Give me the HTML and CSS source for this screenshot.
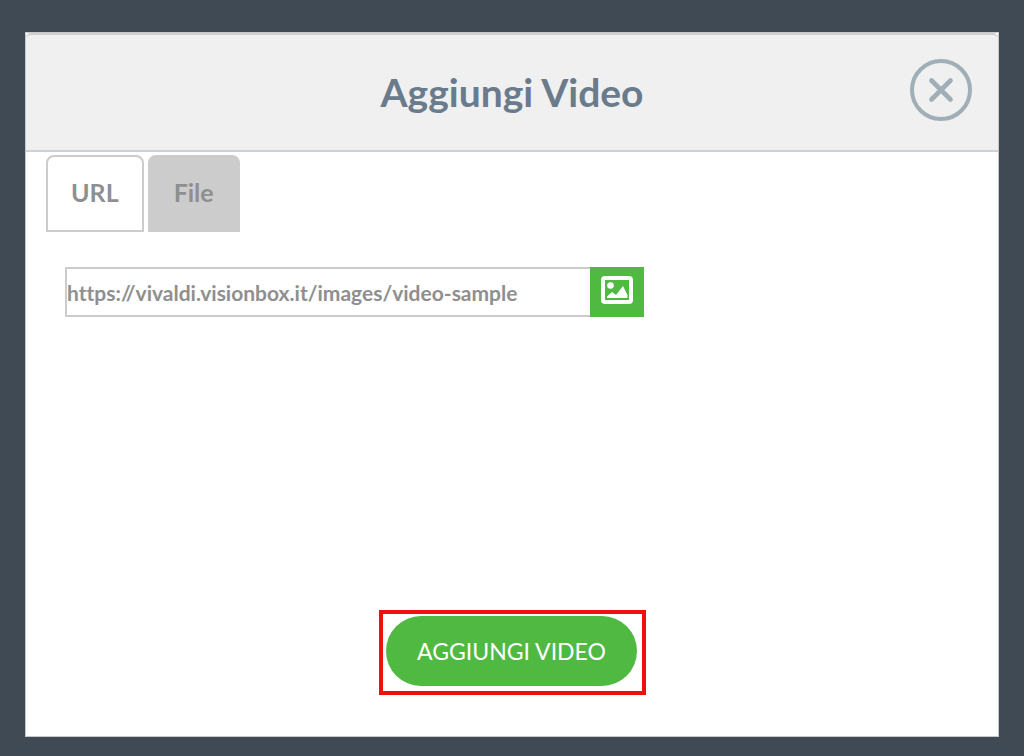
FILE: index.html
```html
<!DOCTYPE html>
<html lang="it">
<head>
<meta charset="utf-8">
<meta name="viewport" content="width=device-width, initial-scale=1">
<title>Aggiungi Video</title>
<link rel="stylesheet" href="styles.css">
</head>
<body class="page">
<main class="dialog" role="dialog" aria-labelledby="dialog-title">
  <header class="dialog-header">
    <h1 class="dialog-title" id="dialog-title">Aggiungi Video</h1>
    <button class="close" type="button" aria-label="Chiudi">
      <svg class="close-icon" viewBox="0 0 62 62" aria-hidden="true">
        <circle cx="31" cy="31" r="29" fill="none" stroke="currentColor" stroke-width="4"/>
        <path d="M21.500 21.500 40.500 40.500M40.500 21.500 21.500 40.500" fill="none" stroke="currentColor" stroke-width="4.600" stroke-linecap="round"/>
      </svg>
    </button>
  </header>
  <div class="tabs" role="tablist">
    <button class="tab tab-active" type="button" role="tab" aria-selected="true">URL</button>
    <button class="tab" type="button" role="tab" aria-selected="false">File</button>
  </div>
  <form class="form">
    <div class="url-row">
      <input class="url-input" type="text" aria-label="URL del video" value="https://vivaldi.visionbox.it/images/video-sample">
      <button class="browse" type="button" aria-label="Sfoglia">
        <svg class="browse-icon" viewBox="0 0 32 28" aria-hidden="true">
          <rect x="2" y="2" width="28" height="24" rx="2" fill="none" stroke="currentColor" stroke-width="4"/>
          <circle cx="9.500" cy="9.500" r="3.300" fill="currentColor"/>
          <path d="M6 22v-1.500l5-4.500 4 3 7-9L26.500 19v3z" fill="currentColor"/>
        </svg>
      </button>
    </div>
    <div class="actions">
      <div class="highlight">
        <button class="submit" type="button">AGGIUNGI VIDEO</button>
      </div>
    </div>
  </form>
</main>
</body>
</html>
```
FILE: styles.css
```css
* {
  box-sizing: border-box;
}

.page {
  display: flex;
  min-height: 100vh;
  margin: 0;
  padding: 32px 25px 19px;
  background: #404a54;
  font-family: Lato, sans-serif;
}

.dialog {
  display: flex;
  flex: 1;
  flex-direction: column;
  border: 1px solid #c8c8cb;
  background: #fff;
}

.dialog-header {
  display: grid;
  grid-template-columns: 1fr auto 1fr;
  align-items: center;
  padding: 24px 26px 29px;
  border-top: 2px solid #d0d0d0;
  border-bottom: 2px solid #ccd1d6;
  border-radius: 5px 5px 0 0;
  background: #f0f0f0;
}

.dialog-title {
  grid-column: 2;
  margin: 4px 0 0;
  color: #6a7b8b;
  font-size: 39px;
  font-weight: 700;
  line-height: 48px;
}

.close {
  justify-self: end;
  width: 62px;
  height: 62px;
  padding: 0;
  border: 0;
  background: none;
  color: #a0afb7;
}

.close-icon,
.browse-icon {
  display: block;
}

.tabs {
  display: flex;
  gap: 4px;
  padding: 3px 20px 0;
}

.tab {
  height: 77px;
  padding: 0 24px 3px;
  border: 2px solid #ccc;
  border-radius: 8px 8px 0 0;
  background: #ccc;
  color: #8f8f8f;
  font-family: inherit;
  font-size: 25px;
  font-weight: 700;
}

.tab-active {
  padding: 0 23px 3px;
  background: #fff;
}

.form {
  display: flex;
  flex: 1;
  flex-direction: column;
  justify-content: space-between;
  padding: 35px 24px 41px 39px;
}

.url-row {
  display: flex;
  width: 579px;
  max-width: 100%;
}

.url-input {
  flex: 1;
  min-width: 0;
  height: 50px;
  padding: 0;
  border: 2px solid #ccc;
  border-right: 0;
  border-radius: 0;
  background: #fff;
  color: #8f8f8f;
  font-family: inherit;
  font-size: 21px;
  font-variant-ligatures: none;
  font-weight: 700;
}

.browse {
  display: flex;
  justify-content: center;
  width: 54px;
  height: 50px;
  padding: 9px 0 0;
  border: 0;
  background: #50b942;
  color: #fff;
}

.browse-icon {
  width: 32px;
  height: 28px;
}

.actions {
  display: flex;
  justify-content: center;
  margin-right: 14px;
}

.highlight {
  padding: 2px 5px 5px 3px;
  border: 4px solid #ee0f0f;
}

.submit {
  height: 70px;
  padding: 0 31px;
  border: 0;
  border-radius: 35px;
  background: #50b942;
  color: #fff;
  font-family: inherit;
  font-size: 23px;
}
```
